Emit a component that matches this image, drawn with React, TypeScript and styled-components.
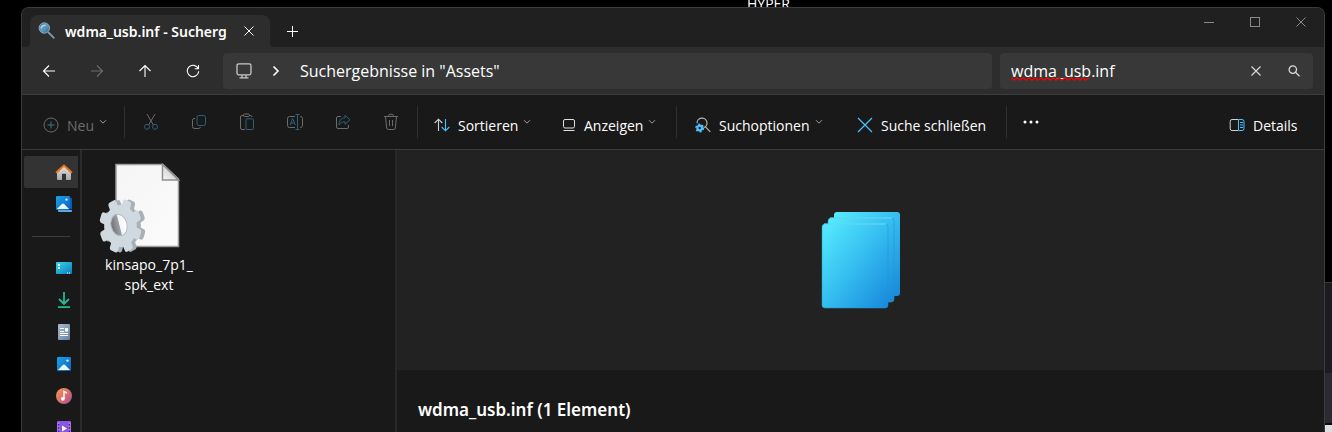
import React, { useState } from "react";
import styled, { createGlobalStyle, css } from "styled-components";

const colors = {
  title: "#202020",
  nav: "#2d2d2d",
  field: "#383838",
  body: "#191919",
  preview: "#222222",
  line: "#3b3b3b",
  text: "#ffffff",
  dim: "#6c6c6c",
  dimBlue: "#2d617b",
  blue: "#4cc2ff",
};

const GlobalStyle = createGlobalStyle`
  * { box-sizing: border-box; }
  body {
    margin: 0;
    overflow: hidden;
    background: #000;
    color: ${colors.text};
    font-family: "Open Sans", "Noto Sans", sans-serif;
    font-size: 14px;
  }
  button, input { font: inherit; color: inherit; }
  svg { display: block; flex: none; }
`;

const Desktop = styled.div`
  position: relative;
  display: flex;
  height: 100vh;
  padding: 7px 7px 0 21px;
  overflow: hidden;
`;

const DesktopLabel = styled.span`
  position: absolute;
  top: -5px;
  left: 747px;
  font-size: 14px;
  line-height: 18px;
`;

const BackWindow = styled.div`
  position: absolute;
  top: 282px;
  right: 0;
  bottom: 0;
  width: 16px;
  display: flex;
  flex-direction: column;
  background: #1c1b22;
  border-top: 1px solid #3a3942;
`;

const BackPanel = styled.div`
  height: 52px;
  margin-top: 90px;
  background: #2b2a33;
  border-bottom: 2px solid #0c0c0f;
`;

const BackPage = styled.div`
  flex: 1;
  background: #dedede;
`;

const Window = styled.main`
  position: relative;
  display: flex;
  flex-direction: column;
  flex: 1;
  min-width: 0;
  background: ${colors.body};
  border: 1px solid #3c3c3c;
  border-bottom: 0;
  border-radius: 8px 8px 0 0;
  overflow: hidden;
`;

const TitleBar = styled.header`
  display: flex;
  height: 39px;
  padding-left: 8px;
  background: ${colors.title};
`;

const Tab = styled.div`
  position: relative;
  display: flex;
  align-items: center;
  width: 240px;
  margin-top: 7px;
  padding: 0 9px 0 8px;
  background: ${colors.nav};
  border-radius: 8px 8px 0 0;

  &::before,
  &::after {
    content: "";
    position: absolute;
    bottom: 0;
    width: 4px;
    height: 4px;
  }
  &::before {
    right: 100%;
    background: radial-gradient(circle at 0 0, transparent 4px, ${colors.nav} 4px);
  }
  &::after {
    left: 100%;
    background: radial-gradient(circle at 100% 0, transparent 4px, ${colors.nav} 4px);
  }
`;

const TabTitle = styled.span`
  flex: 1;
  margin-left: 9px;
  font-family: "Noto Sans", sans-serif;
  font-weight: 600;
  white-space: nowrap;
`;

const IconButton = styled.button<{ $width?: number; $height?: number; $color?: string }>`
  display: flex;
  flex: none;
  align-items: center;
  justify-content: center;
  width: ${(p) => p.$width ?? 48}px;
  height: ${(p) => p.$height ?? 32}px;
  padding: 0;
  border: 0;
  background: none;
  color: ${(p) => p.$color ?? colors.text};
`;

const NewTab = styled.div`
  display: flex;
  align-items: center;
  margin: 7px auto 0 6px;
`;

const Caption = styled.div`
  display: flex;
`;

const NavBar = styled.nav`
  display: flex;
  align-items: center;
  height: 48px;
  padding: 0 11px 0 3px;
  background: ${colors.nav};
  border-bottom: 1px solid ${colors.line};
`;

const fieldBox = css`
  display: flex;
  align-items: center;
  height: 36px;
  background: ${colors.field};
  border-radius: 4px;
  font-size: 16px;
`;

const AddressBar = styled.div`
  ${fieldBox}
  flex: 1;
  min-width: 0;
  margin: 0 8px 0 6px;
  padding-left: 13px;
`;

const Crumb = styled.span`
  white-space: nowrap;
`;

const SearchBox = styled.div`
  ${fieldBox}
  position: relative;
  flex: none;
  width: 313px;
`;

const SearchInput = styled.input`
  flex: 1;
  min-width: 0;
  height: 100%;
  padding: 0 0 0 11px;
  border: 0;
  outline: 0;
  background: none;
`;

const Squiggle = styled.svg`
  position: absolute;
  left: 11px;
  top: 24px;
`;

const Toolbar = styled.div`
  display: flex;
  align-items: center;
  flex: none;
  height: 55px;
  padding: 0 17px 0 13px;
  border-bottom: 1px solid ${colors.line};
`;

const FileActions = styled.div`
  display: flex;
  padding: 0 2px;
`;

const Command = styled.button<{ $width: number; $dim?: boolean }>`
  display: flex;
  flex: none;
  align-items: center;
  width: ${(p) => p.$width}px;
  height: 40px;
  padding: 6px 0 0 8px;
  border: 0;
  background: none;
  color: ${(p) => (p.$dim ? colors.dim : colors.text)};
  white-space: nowrap;
`;

const CommandLabel = styled.span`
  margin-left: 8px;
`;

const Drop = styled.svg`
  margin: 0 0 6px 5px;
`;

const Divider = styled.span<{ $gap?: number }>`
  flex: none;
  width: 1px;
  height: 32px;
  margin-right: ${(p) => p.$gap ?? 0}px;
  background: #303030;
`;

const Gap = styled.span`
  flex: 1;
`;

const Content = styled.div`
  display: flex;
  flex: 1;
  min-height: 0;
`;

const Sidebar = styled.aside`
  flex: none;
  width: 60px;
  padding: 6px 2px 0 2px;
  border-right: 2px solid #2a2a2a;
  overflow: hidden;
`;

const Place = styled.button<{ $active?: boolean }>`
  display: flex;
  align-items: center;
  justify-content: flex-end;
  width: 100%;
  height: 32px;
  padding: 0 5px 0 0;
  border: 0;
  border-radius: 2px 0 0 2px;
  background: ${(p) => (p.$active ? "#333333" : "none")};
`;

const PlaceRule = styled.hr`
  height: 1px;
  margin: 16px 8px 15px 8px;
  border: 0;
  background: #3f3f3f;
`;

const FileList = styled.section`
  flex: none;
  width: 315px;
  padding: 12px 0 0 12px;
  border-right: 2px solid #282828;
`;

const FileItem = styled.button`
  display: flex;
  flex-direction: column;
  align-items: center;
  width: 110px;
  padding: 0;
  border: 0;
  background: none;
  line-height: 20px;
`;

const FileIconBox = styled.span`
  align-self: flex-start;
  padding: 0 0 1px 5px;
`;

const Details = styled.section`
  flex: 1;
  min-width: 0;
`;

const Preview = styled.div`
  display: flex;
  align-items: center;
  justify-content: center;
  height: 220px;
  background: ${colors.preview};
`;

const DetailsTitle = styled.h2`
  margin: 0;
  padding: 28px 21px;
  font-family: "Noto Sans", sans-serif;
  font-size: 17px;
  font-weight: 600;
  line-height: 24px;
`;

const line = { fill: "none", stroke: "currentColor", strokeWidth: 1 } as const;

const Chevron = () => (
  <Drop width="8" height="6" viewBox="0 0 8 6" fill="none" stroke="#a0a0a0">
    <path d="M1 1.2 4 4.2 7 1.2" />
  </Drop>
);

const Cross = ({ size = 10, width = 1 }: { size?: number; width?: number }) => (
  <svg width={size} height={size} viewBox={`0 0 ${size} ${size}`} {...line} strokeWidth={width}>
    <path d={`M.5 .5 ${size - 0.5} ${size - 0.5}M${size - 0.5} .5 .5 ${size - 0.5}`} />
  </svg>
);

const TabSearchIcon = () => (
  <svg width="18" height="18" viewBox="0 0 18 18">
    <defs>
      <linearGradient id="lens" x1="0" y1="0" x2="1" y2="1">
        <stop offset="0" stopColor="#3f6f91" />
        <stop offset=".5" stopColor="#5f9cc0" />
        <stop offset="1" stopColor="#315d7d" />
      </linearGradient>
    </defs>
    <path d="M10 10 16.3 16.3" stroke="#8798a5" strokeWidth="1.8" />
    <circle cx="6.3" cy="6" r="5.2" fill="url(#lens)" stroke="#8babc0" />
    <path d="M3 6.500C3.500 4 5 3 7.500 3.200" fill="none" stroke="#b5d4e6" strokeWidth="1.500" />
  </svg>
);

const ArrowIcon = ({ angle = 0 }: { angle?: number }) => (
  <svg width="14" height="14" viewBox="0 0 14 14" {...line} strokeWidth="1.1">
    <path d="M13 7H1.5M7 1.5 1.5 7 7 12.5" transform={`rotate(${angle} 7 7)`} />
  </svg>
);

const RefreshIcon = () => (
  <svg width="14" height="14" viewBox="0 0 14 14" {...line} strokeWidth="1.1">
    <path d="M12.2 4.600A5.700 5.700 0 1 0 12.7 7.300M12.500 1V4.700H8.800" />
  </svg>
);

const MonitorIcon = () => (
  <svg width="16" height="16" viewBox="0 0 16 16" fill="none" stroke="#c8c8c8" strokeWidth="1.3">
    <rect x="1" y=".8" width="14" height="11" rx="1.8" />
    <path d="M6 12v2.6M10 12v2.6M3.5 14.8h9" />
  </svg>
);

const NewIcon = () => (
  <svg width="16" height="16" viewBox="0 0 16 16" fill="none">
    <circle cx="8" cy="8" r="7" stroke="#6a6a6a" />
    <path d="M8 4.5v7M4.5 8h7" stroke="#3a7592" />
  </svg>
);

const CutIcon = () => (
  <svg width="16" height="18" viewBox="0 0 16 18" fill="none">
    <path d="M4 1 10.4 12M12 1 5.6 12" stroke={colors.dim} />
    <circle cx="4" cy="13.8" r="2.5" stroke={colors.dimBlue} />
    <circle cx="12" cy="13.8" r="2.5" stroke={colors.dimBlue} />
  </svg>
);

const CopyIcon = () => (
  <svg width="16" height="16" viewBox="0 0 16 16" fill="none">
    <path d="M4 4.5H3A1.8 1.8 0 0 0 1.5 6.3v6.2a2 2 0 0 0 2 2h4A1.8 1.8 0 0 0 9.4 13" stroke={colors.dim} />
    <rect x="6" y="1.5" width="8.5" height="10" rx="1.8" stroke={colors.dimBlue} />
  </svg>
);

const PasteIcon = () => (
  <svg width="16" height="18" viewBox="0 0 16 18" fill="none">
    <path d="M5 2.5H3a1.5 1.5 0 0 0-1.5 1.5v11A1.5 1.5 0 0 0 3 16.5h3M10 2.5h1.5A1.5 1.5 0 0 1 13 4" stroke={colors.dim} />
    <rect x="4.5" y="1" width="6" height="2.5" rx="1.2" stroke={colors.dim} />
    <rect x="7" y="5.8" width="7.5" height="10.7" rx="1" stroke={colors.dimBlue} />
  </svg>
);

const RenameIcon = () => (
  <svg width="18" height="16" viewBox="0 0 18 16" fill="none">
    <path d="M9 2.5H3.5a2 2 0 0 0-2 2v7a2 2 0 0 0 2 2H9M14 2.5h.5a2 2 0 0 1 2 2v7a2 2 0 0 1-2 2H14" stroke={colors.dim} />
    <path d="M11.5 1v14M9.5 .5h4M9.5 15.5h4M4 11 6.7 4.5 9.3 11M5 9h3.6" stroke={colors.dimBlue} />
  </svg>
);

const ShareIcon = () => (
  <svg width="16" height="16" viewBox="0 0 16 16" fill="none">
    <path d="M6 2.5H3A1.5 1.5 0 0 0 1.5 4v9A1.5 1.5 0 0 0 3 14.5h9a1.5 1.5 0 0 0 1.5-1.5v-2" stroke={colors.dim} />
    <path d="M10 1.2 15 5.8 10 10.3V7.8C7 7.7 5.5 8.8 4 11 4 7 6 4 10 3.8Z" stroke={colors.dimBlue} />
  </svg>
);

const TrashIcon = () => (
  <svg width="16" height="18" viewBox="0 0 16 18" fill="none" stroke={colors.dim}>
    <path d="M1 3.5h14M5.7 3.3V2.5A1.2 1.2 0 0 1 7 1.3h2a1.2 1.2 0 0 1 1.3 1.2v.8M2.5 3.5l1.2 11.6a1.5 1.5 0 0 0 1.5 1.4h5.6a1.5 1.5 0 0 0 1.5-1.4l1.2-11.6M6.5 7v6M9.5 7v6" />
  </svg>
);

const SortIcon = () => (
  <svg width="16" height="14" viewBox="0 0 16 14" fill="none" strokeWidth="1.1">
    <path d="M4.5 13V1.2M.7 5 4.5 1.2 8.3 5" stroke="#d0d0d0" />
    <path d="M11.5 1v11.8M7.7 9l3.8 3.8L15.3 9" stroke={colors.blue} />
  </svg>
);

const ViewIcon = () => (
  <svg width="14" height="14" viewBox="0 0 14 14" fill="none" stroke="#e0e0e0">
    <rect x="1.5" y="1.5" width="11" height="8.5" rx="1.5" />
    <path d="M1.5 12.5h11" />
  </svg>
);

const SearchOptionsIcon = () => (
  <svg width="16" height="16" viewBox="0 0 16 16" fill="none">
    <path d="M2 6.2A5 5 0 1 1 8.6 10.8M10.5 9.8 15.3 14.8" stroke="#b5b5b5" strokeWidth="1.2" />
    <circle cx="4.700" cy="11" r="2.3" stroke={colors.blue} strokeWidth="2.2" />
    <circle cx="4.700" cy="11" r="3.7" stroke={colors.blue} strokeWidth="1.6" strokeDasharray="1.94 1.94" />
  </svg>
);

const DetailsIcon = () => (
  <svg width="16" height="14" viewBox="0 0 16 14" fill="none">
    <path d="M9 1.5H3A1.8 1.8 0 0 0 1.2 3.3v7.4A1.8 1.8 0 0 0 3 12.5h6" stroke="#d0d0d0" />
    <path d="M9.5 1.5H13a2 2 0 0 1 2 2v7a2 2 0 0 1-2 2H9.5ZM11 4.5h3M11 7h3M11 9.5h3" stroke={colors.blue} />
  </svg>
);

const HomeIcon = () => (
  <svg width="18" height="18" viewBox="0 0 18 18">
    <defs>
      <linearGradient id="wall" x1="0" y1="0" x2="0" y2="1">
        <stop offset="0" stopColor="#e2e2e2" />
        <stop offset="1" stopColor="#a9a9a9" />
      </linearGradient>
    </defs>
    <path d="M2 8 9 2.6 16 8v8a1 1 0 0 1-1 1h-4v-5.5a.8.8 0 0 0-.8-.8H7.8a.8.8 0 0 0-.8.8V17H3a1 1 0 0 1-1-1Z" fill="url(#wall)" />
    <path d="M1.6 9.2 9 2.6l7.4 6.6" fill="none" stroke="#e8731a" strokeWidth="2" strokeLinecap="round" strokeLinejoin="round" />
  </svg>
);

const PictureShape = () => (
  <>
    <defs>
      <linearGradient id="sky" x1="0" y1="0" x2="1" y2="1">
        <stop offset="0" stopColor="#1ba3ea" />
        <stop offset="1" stopColor="#0b62bd" />
      </linearGradient>
    </defs>
    <rect width="14" height="14" rx="1.2" fill="url(#sky)" />
    <path d="M1 13 5.9 8a1.5 1.5 0 0 1 2.2 0L13 13Z" fill="#eef8ff" />
    <circle cx="10.5" cy="3.6" r="1.2" fill="#d9f0ff" />
  </>
);

const GalleryIcon = () => (
  <svg width="18" height="18" viewBox="0 0 18 18">
    <path d="M15 3h1a1 1 0 0 1 1 1v10h-2Z" fill="#0b5cad" />
    <path d="M3 15h14v1a1 1 0 0 1-1 1H4a1 1 0 0 1-1-1Z" fill="#5aa7ea" />
    <g transform="translate(1 1)"><PictureShape /></g>
  </svg>
);

const PicturesIcon = () => (
  <svg width="18" height="18" viewBox="0 0 18 18">
    <g transform="translate(2 2)"><PictureShape /></g>
  </svg>
);

const DesktopIcon = () => (
  <svg width="18" height="18" viewBox="0 0 18 18">
    <defs>
      <linearGradient id="desk" x1="0" y1="0" x2="1" y2="1">
        <stop offset="0" stopColor="#36d7ea" />
        <stop offset="1" stopColor="#0b7bbd" />
      </linearGradient>
    </defs>
    <rect x="1" y="3" width="16" height="12" rx="1" fill="url(#desk)" />
    <path d="M3 5h2v2H3ZM3 8h2v2H3ZM12 13.5h1v1h-1ZM14 13.5h1v1h-1Z" fill="#fff" />
  </svg>
);

const DownloadIcon = () => (
  <svg width="18" height="18" viewBox="0 0 18 18" fill="none" stroke="#25b893" strokeWidth="1.8">
    <path d="M9 1v11.5M4 8l5 5 5-5M3 16.2h12" />
  </svg>
);

const DocumentIcon = () => (
  <svg width="18" height="18" viewBox="0 0 18 18">
    <defs>
      <linearGradient id="doc" x1="0" y1="0" x2="1" y2="1">
        <stop offset="0" stopColor="#a9bad0" />
        <stop offset="1" stopColor="#6283a3" />
      </linearGradient>
    </defs>
    <rect x="3" y="1" width="12" height="16" rx="1" fill="url(#doc)" />
    <path d="M5 5.5h4M5 8.500h4M5 10.5h8M5 12.500h8" stroke="#fff" />
    <path d="M10 5h3v3.5h-3Z" fill="#fff" />
  </svg>
);

const MusicIcon = () => (
  <svg width="18" height="18" viewBox="0 0 18 18">
    <defs>
      <linearGradient id="music" x1="0" y1="0" x2="1" y2="1">
        <stop offset="0" stopColor="#f49a55" />
        <stop offset=".55" stopColor="#d96b6a" />
        <stop offset="1" stopColor="#9a4fa8" />
      </linearGradient>
    </defs>
    <circle cx="9" cy="9" r="8" fill="url(#music)" />
    <circle cx="7.8" cy="11.8" r="1.9" fill="#fff" />
    <path d="M9 12V4.5l3 1.7" fill="none" stroke="#fff" strokeWidth="1.4" />
  </svg>
);

const VideoIcon = () => (
  <svg width="18" height="18" viewBox="0 0 18 18">
    <rect x="2" y="2" width="14" height="14" rx="1" fill="#8a55e0" />
    <path d="M2 3.5h3V16H2ZM13 3.5h3V16h-3Z" fill="#a571f0" />
    <path d="M3 5h1.4v1.4H3ZM3 8.3h1.4v1.4H3ZM3 11.6h1.4V13H3ZM13.6 5H15v1.4h-1.4ZM13.6 8.3H15v1.4h-1.4ZM13.6 11.6H15V13h-1.4Z" fill="#3b1c78" />
    <path d="M7 6.5 12 9.5 7 12.5Z" fill="#fff" />
  </svg>
);

const teeth = Array.from({ length: 8 }, (_, i) => i * 45);

const GearBody = () => (
  <>
    <circle r="21" />
    {teeth.map((a) => (
      <rect key={a} x="-5.500" y="-27" width="11" height="16" rx="3" transform={`rotate(${a})`} />
    ))}
  </>
);

const SetupFileIcon = () => (
  <svg width="82" height="92" viewBox="0 0 82 92">
    <defs>
      <linearGradient id="page" x1="0" y1="0" x2="1" y2="1">
        <stop offset="0" stopColor="#f5f5f6" />
        <stop offset="1" stopColor="#fbfbfb" />
      </linearGradient>
      <linearGradient id="fold" x1="0" y1="1" x2="1" y2="0">
        <stop offset="0" stopColor="#fafafa" />
        <stop offset="1" stopColor="#b5b5b5" />
      </linearGradient>
      <linearGradient id="hole" x1="0" y1="0" x2="1" y2="0">
        <stop offset="0" stopColor="#6d7175" />
        <stop offset=".5" stopColor="#9da1a5" />
        <stop offset=".55" stopColor="#f4f5f6" />
        <stop offset="1" stopColor="#ffffff" />
      </linearGradient>
    </defs>
    <path d="M17 2.500H64L79.500 17V84.500H17Z" fill="url(#page)" stroke="#9c9c9c" strokeWidth="1.500" />
    <path d="M63.500 2.500V18H79.500Z" fill="url(#fold)" stroke="#8f8f8f" strokeWidth="1.500" />
    <g transform="translate(25.500 64) scale(.78 1) rotate(20)" fill="#a9b0b6"><GearBody /></g>
    <g transform="translate(21.500 64) scale(.78 1) rotate(20)" fill="#d1d9e0"><GearBody /></g>
    <ellipse cx="20" cy="63" rx="8" ry="11" transform="rotate(-14 20 63)" fill="url(#hole)" stroke="#b4bcc3" />
  </svg>
);

const StackIcon = () => (
  <svg width="80" height="98" viewBox="0 0 80 98">
    <defs>
      <linearGradient id="sheet" x1="0" y1="0" x2="1" y2="1">
        <stop offset="0" stopColor="#55ecff" />
        <stop offset=".5" stopColor="#35bdf0" />
        <stop offset="1" stopColor="#1788dc" />
      </linearGradient>
    </defs>
    <rect x="13" y="1" width="66" height="84" rx="3" fill="url(#sheet)" />
    <rect x="7" y="7" width="66" height="84" rx="3" fill="url(#sheet)" stroke="#2196cc" strokeOpacity=".6" />
    <path d="M9 7h62" stroke="#77e6fb" />
    <rect x="1" y="13" width="66" height="84" rx="3" fill="url(#sheet)" stroke="#2196cc" strokeOpacity=".5" />
    <path d="M3 13h62" stroke="#77e6fb" />
  </svg>
);

const places = [
  { name: "Start", icon: <HomeIcon />, active: true },
  { name: "Katalog", icon: <GalleryIcon /> },
];

const pinned = [
  { name: "Desktop", icon: <DesktopIcon /> },
  { name: "Downloads", icon: <DownloadIcon /> },
  { name: "Dokumente", icon: <DocumentIcon /> },
  { name: "Bilder", icon: <PicturesIcon /> },
  { name: "Musik", icon: <MusicIcon /> },
  { name: "Videos", icon: <VideoIcon /> },
];

const fileActions = [
  { name: "Ausschneiden", icon: <CutIcon /> },
  { name: "Kopieren", icon: <CopyIcon /> },
  { name: "Einfügen", icon: <PasteIcon /> },
  { name: "Umbenennen", icon: <RenameIcon /> },
  { name: "Freigeben", icon: <ShareIcon /> },
  { name: "Löschen", icon: <TrashIcon /> },
];

export default function App() {
  const [query, setQuery] = useState("wdma_usb.inf");

  return (
    <Desktop>
      <GlobalStyle />
      <DesktopLabel>HYPER</DesktopLabel>
      <BackWindow>
        <BackPanel />
        <BackPage />
      </BackWindow>
      <Window>
        <TitleBar>
          <Tab>
            <TabSearchIcon />
            <TabTitle>wdma_usb.inf - Sucherg</TabTitle>
            <IconButton $width={24} aria-label="Tab schließen"><Cross /></IconButton>
          </Tab>
          <NewTab>
            <IconButton $width={32} aria-label="Neuer Tab">
              <svg width="12" height="12" viewBox="0 0 12 12" {...line}>
                <path d="M6.500 1v11M1 6.500h11" />
              </svg>
            </IconButton>
          </NewTab>
          <Caption>
            <IconButton $width={46} $height={28} $color="#8a8a8a" aria-label="Minimieren">
              <svg width="10" height="10" viewBox="0 0 10 10" {...line}><path d="M0 5.500h10" /></svg>
            </IconButton>
            <IconButton $width={46} $height={28} $color="#8a8a8a" aria-label="Maximieren">
              <svg width="10" height="10" viewBox="0 0 10 10" {...line}><rect x=".5" y=".5" width="9" height="9" /></svg>
            </IconButton>
            <IconButton $width={46} $height={28} $color="#8a8a8a" aria-label="Schließen"><Cross /></IconButton>
          </Caption>
        </TitleBar>

        <NavBar>
          <IconButton aria-label="Zurück"><ArrowIcon /></IconButton>
          <IconButton $color="#6c6c6c" aria-label="Vorwärts"><ArrowIcon angle={180} /></IconButton>
          <IconButton aria-label="Nach oben"><ArrowIcon angle={90} /></IconButton>
          <IconButton aria-label="Aktualisieren"><RefreshIcon /></IconButton>
          <AddressBar>
            <MonitorIcon />
            <IconButton aria-label="Pfad anzeigen">
              <svg width="8" height="12" viewBox="0 0 8 12" {...line} strokeWidth="1.600"><path d="M1.500 1.500 6 6 1.500 10.500" /></svg>
            </IconButton>
            <Crumb>Suchergebnisse in "Assets"</Crumb>
          </AddressBar>
          <SearchBox>
            <SearchInput
              aria-label="Suchen"
              spellCheck={false}
              value={query}
              onChange={(e) => setQuery(e.target.value)}
            />
            <Squiggle width="79" height="4" viewBox="0 0 79 4" fill="none" stroke="#ff0000" strokeWidth="1.200">
              <path d={"M0 .8" + Array.from({ length: 13 }, () => "l3 2.400l3 -2.400").join("")} />
            </Squiggle>
            <IconButton $width={38} aria-label="Suche löschen" $color="#d8d8d8"><Cross size={10} width={1.2} /></IconButton>
            <IconButton $width={38} aria-label="Suche starten" $color="#d8d8d8">
              <svg width="12" height="12" viewBox="0 0 12 12" {...line} strokeWidth="1.300">
                <circle cx="4.800" cy="4.600" r="3.700" /><path d="M7.500 7.300 11.500 11.300" />
              </svg>
            </IconButton>
          </SearchBox>
        </NavBar>

        <Toolbar>
          <Command $width={89} $dim><NewIcon /><CommandLabel>Neu</CommandLabel><Chevron /></Command>
          <Divider />
          <FileActions>
            {fileActions.map((a) => (
              <IconButton key={a.name} aria-label={a.name}>{a.icon}</IconButton>
            ))}
          </FileActions>
          <Divider $gap={8} />
          <Command $width={128}><SortIcon /><CommandLabel>Sortieren</CommandLabel><Chevron /></Command>
          <Command $width={122}><ViewIcon /><CommandLabel>Anzeigen</CommandLabel><Chevron /></Command>
          <Divider $gap={10} />
          <Command $width={162}><SearchOptionsIcon /><CommandLabel>Suchoptionen</CommandLabel><Chevron /></Command>
          <Command $width={157}>
            <svg width="16" height="16" viewBox="0 0 16 16" fill="none" stroke={colors.blue} strokeWidth="1.200">
              <path d="M1 1 15 15M15 1 1 15" />
            </svg>
            <CommandLabel>Suche schließen</CommandLabel>
          </Command>
          <Divider />
          <IconButton aria-label="Weitere Optionen">
            <svg width="16" height="4" viewBox="0 0 16 4" fill="#fff">
              <circle cx="2" cy="2" r="1.500" /><circle cx="8" cy="2" r="1.500" /><circle cx="14" cy="2" r="1.500" />
            </svg>
          </IconButton>
          <Gap />
          <Command $width={86}><DetailsIcon /><CommandLabel>Details</CommandLabel></Command>
        </Toolbar>

        <Content>
          <Sidebar>
            {places.map((p) => (
              <Place key={p.name} $active={p.active} aria-label={p.name}>{p.icon}</Place>
            ))}
            <PlaceRule />
            {pinned.map((p) => (
              <Place key={p.name} aria-label={p.name}>{p.icon}</Place>
            ))}
          </Sidebar>
          <FileList>
            <FileItem>
              <FileIconBox><SetupFileIcon /></FileIconBox>
              <span>kinsapo_7p1_<br />spk_ext</span>
            </FileItem>
          </FileList>
          <Details>
            <Preview><StackIcon /></Preview>
            <DetailsTitle>wdma_usb.inf (1 Element)</DetailsTitle>
          </Details>
        </Content>
      </Window>
    </Desktop>
  );
}
